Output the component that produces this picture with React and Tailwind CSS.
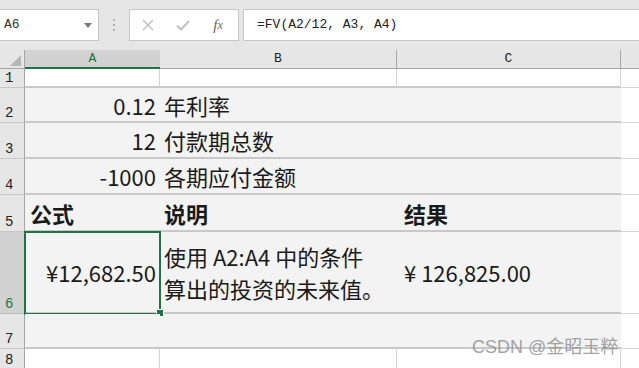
import React from 'react';

const cjk = "font-['Noto_Sans_CJK_SC',sans-serif]";
const mono = "font-['Liberation_Mono','Noto_Sans_CJK_SC',monospace]";

const RowHead = ({ n, h, active, top }) => (
    <div
        className={`w-[25px] shrink-0 border-r border-b flex pl-[5px] text-[14px] leading-[16px] ${mono} ${
            top ? 'items-start pt-[3px]' : 'items-end pb-[1px]'
        } ${
            active
                ? 'bg-[#d2d2d2] text-[#217346] border-r-[#217346] border-b-[#bdbdbd]'
                : 'bg-[#e6e6e6] text-[#222] border-r-[#a6a6a6] border-b-[#c8c8c8]'
        }`}
        style={{ height: h }}
    >
        {n}
    </div>
);

const PlainRow = ({ n, h, thick, top }) => (
    <div className="flex" style={{ height: h }}>
        <RowHead n={n} h={h} top={top} />
        <div className={`w-[135px] shrink-0 bg-white border-r border-[#d4d4d4] ${thick ? 'border-b-2 border-b-[#c8c8c8]' : ''}`} />
        <div className={`w-[237px] shrink-0 bg-white border-r border-[#d4d4d4] ${thick ? 'border-b-2 border-b-[#c8c8c8]' : ''}`} />
        <div className={`w-[224px] shrink-0 bg-white border-r border-[#d4d4d4] ${thick ? 'border-b-2 border-b-[#c8c8c8]' : ''}`} />
        <div className="flex-1 bg-white border-b border-[#d4d4d4]" />
    </div>
);

const Row = ({ n, h, a, b, c, bold, active, children }) => (
    <div className="flex" style={{ height: h }}>
        <RowHead n={n} h={h} active={active} />
        <div className={`relative w-[135px] shrink-0 bg-[#f3f3f3] border-b-2 border-[#c8c8c8] flex items-center ${bold ? 'justify-start pl-[5px] font-bold' : 'justify-end pr-[4px]'}`}>
            {a}
            {children}
        </div>
        <div className={`w-[237px] shrink-0 bg-[#f3f3f3] border-b-2 border-[#c8c8c8] flex items-center pl-[4px] ${bold ? 'font-bold' : ''}`}>
            {b}
        </div>
        <div className={`w-[224px] shrink-0 bg-[#f3f3f3] border-b-2 border-[#c8c8c8] flex items-center pl-[7px] ${bold ? 'font-bold' : ''}`}>
            {c}
        </div>
        <div className="flex-1 bg-white border-b border-[#d4d4d4]" />
    </div>
);

export default function App() {
    return (
        <div className={`relative w-[639px] h-[368px] overflow-hidden bg-white text-[22px] leading-[32px] text-[#1a1a1a] ${cjk}`}>
            {/* formula bar */}
            <div className="h-[50px] bg-[#e6e6e6] flex items-start pt-[9px]">
                <div className={`w-[99px] h-[32px] bg-white border border-[#c6c6c6] border-l-0 flex items-center justify-between pl-[4px] pr-[6px] text-[13px] text-[#333] ${mono}`}>
                    <span>A6</span>
                    <svg width="8" height="5" viewBox="0 0 8 5"><path d="M0 0h8L4 5z" fill="#7a7a7a" /></svg>
                </div>
                <div className="w-[30px] h-[32px] flex flex-col items-center justify-center gap-[3px]">
                    <div className="w-[2px] h-[2px] bg-[#b0b0b0]" />
                    <div className="w-[2px] h-[2px] bg-[#b0b0b0]" />
                    <div className="w-[2px] h-[2px] bg-[#b0b0b0]" />
                </div>
                <div className="w-[110px] h-[32px] bg-white border border-[#c6c6c6] flex items-center">
                    <div className="w-[36px] flex justify-center">
                        <svg width="12" height="12" viewBox="0 0 12 12"><path d="M1 1l10 10M11 1L1 11" stroke="#bdbdbd" strokeWidth="1.3" /></svg>
                    </div>
                    <div className="w-[34px] flex justify-center">
                        <svg width="14" height="11" viewBox="0 0 14 11"><path d="M1 5.5l4 4L13 1" stroke="#c0c0c0" strokeWidth="2" fill="none" /></svg>
                    </div>
                    <div className="w-[36px] flex justify-center italic text-[15px] text-[#666] font-['Liberation_Serif',serif]">
                        f<span className="text-[12px]">x</span>
                    </div>
                </div>
                <div className={`flex-1 h-[32px] ml-[4px] bg-white border border-[#c6c6c6] border-r-0 flex items-center pl-[13px] text-[13px] text-[#222] ${mono}`}>
                    =FV(A2/12, A3, A4)
                </div>
            </div>

            {/* column headers */}
            <div className={`flex h-[19px] text-[13px] leading-[18px] text-[#222] ${mono}`}>
                <div className="w-[25px] shrink-0 bg-[#e6e6e6] border-r border-b border-[#a6a6a6] flex items-end justify-end pr-[3px] pb-[2px]">
                    <svg width="11" height="11" viewBox="0 0 11 11"><path d="M11 0v11H0z" fill="#b5b5b5" /></svg>
                </div>
                <div className="w-[135px] shrink-0 bg-[#d2d2d2] border-b-2 border-[#217346] text-[#217346] flex justify-center">A</div>
                <div className="w-[237px] shrink-0 bg-[#e6e6e6] border-r border-b border-[#a6a6a6] flex justify-center">B</div>
                <div className="w-[224px] shrink-0 bg-[#e6e6e6] border-r border-b border-[#a6a6a6] flex justify-center">C</div>
                <div className="flex-1 bg-[#e6e6e6] border-b border-[#a6a6a6]" />
            </div>

            <PlainRow n="1" h={19} thick />
            <Row n="2" h={35} a="0.12" b="年利率" />
            <Row n="3" h={36} a="12" b="付款期总数" />
            <Row n="4" h={36} a="-1000" b="各期应付金额" />
            <Row n="5" h={37} a="公式" b="说明" c="结果" bold />
            <Row
                n="6"
                h={82}
                active
                a="¥12,682.50"
                b={<span>使用 A2:A4 中的条件<br />算出的投资的未来值。</span>}
                c="¥ 126,825.00"
            >
                <div className="absolute -left-[1px] -top-[1px] w-[137px] h-[84px] border-2 border-[#217346]" />
                <div className="absolute left-[131px] top-[77px] w-[8px] h-[8px] bg-[#217346] border border-white" />
            </Row>
            <Row n="7" h={35} />
            <PlainRow n="8" h={30} top />

            {/* watermark */}
            <div className="absolute left-[472px] top-[335px] text-[18px] leading-[24px] text-[#8c8c8c]/80 font-['Liberation_Sans','Noto_Sans_CJK_SC',sans-serif]">
                CSDN @金昭玉粹
            </div>
        </div>
    );
}
